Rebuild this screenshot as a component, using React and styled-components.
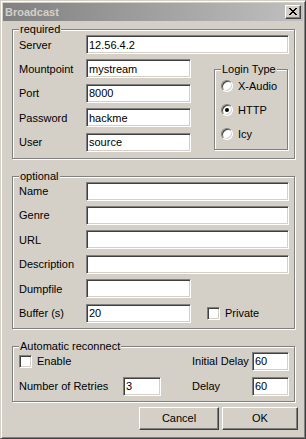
import React from "react";
import styled, { createGlobalStyle } from "styled-components";

const GlobalStyle = createGlobalStyle`
  html, body {
    margin: 0;
    padding: 0;
    background: #d4d0c8;
  }
  body {
    font-family: "Liberation Sans", Arial, sans-serif;
    font-size: 11px;
    color: #000;
  }
  * {
    box-sizing: border-box;
  }
`;

const Window = styled.div`
  width: 306px;
  height: 439px;
  background: #d4d0c8;
  border: 1px solid;
  border-color: #d4d0c8 #404040 #404040 #d4d0c8;
  box-shadow: inset 1px 1px 0 #fff, inset -1px -1px 0 #808080;
  padding: 2px;
  display: flex;
  flex-direction: column;
`;

const TitleBar = styled.div`
  height: 18px;
  display: flex;
  align-items: center;
  padding: 0 2px;
  background: linear-gradient(to right, #808080, #c0c0c0);
`;

const Title = styled.span`
  flex: 1;
  color: #d4d0c8;
  font-weight: bold;
  font-size: 11px;
`;

const CloseBtn = styled.div`
  width: 16px;
  height: 14px;
  background: #d4d0c8;
  border: 1px solid;
  border-color: #fff #404040 #404040 #fff;
  box-shadow: inset -1px -1px 0 #808080;
  display: flex;
  align-items: center;
  justify-content: center;
  padding-bottom: 1px;
`;

const Body = styled.div`
  display: flex;
  flex-direction: column;
  gap: 17px;
  padding: 8px 5px 0 9px;
`;

// etched group box, the caption sits over the top edge
const Group = styled.div`
  position: relative;
  width: 283px;
  border: 1px solid #808080;
  box-shadow: inset 1px 1px 0 #fff, 1px 1px 0 #fff;
  padding: 5px 5px ${(p) => p.$padBottom || 5}px 6px;
`;

const Legend = styled.span`
  position: absolute;
  top: -7px;
  left: 6px;
  line-height: 13px;
  padding: 0 1px;
  background: #d4d0c8;
  white-space: nowrap;
`;

const FormGrid = styled.div`
  display: grid;
  grid-template-columns: 67px 105px 1fr 75px;
  grid-auto-rows: 19px;
  row-gap: 5.4px;
  align-items: center;
`;

const Label = styled.span`
  grid-column: ${(p) => p.$col || "auto"};
  white-space: nowrap;
`;

const Field = styled.input`
  height: 19px;
  width: 100%;
  grid-column: ${(p) => p.$span || "auto"};
  border: 1px solid;
  border-color: #808080 #fff #fff #808080;
  box-shadow: inset 1px 1px 0 #404040, inset -1px -1px 0 #d4d0c8;
  background: #fff;
  padding: 0 2px;
  font: 11px "Liberation Sans", Arial, sans-serif;
  color: #000;
  outline: none;
`;

const LoginBox = styled.div`
  position: relative;
  grid-column: 4;
  grid-row: 2 / 6;
  align-self: start;
  justify-self: start;
  margin-top: 10px;
  width: 74px;
  height: 81px;
  border: 1px solid #808080;
  box-shadow: inset 1px 1px 0 #fff, 1px 1px 0 #fff;
  padding: 4px 0 0 6px;
`;

const OptionRow = styled.label`
  display: flex;
  align-items: center;
  gap: 5px;
  height: 24px;
  white-space: nowrap;
`;

const RadioDot = styled.span`
  width: 12px;
  height: 12px;
  border-radius: 50%;
  background: #fff;
  border: 1px solid;
  border-color: #808080 #fff #fff #808080;
  box-shadow: inset 1px 1px 0 #404040, inset -1px -1px 0 #d4d0c8;
  flex-shrink: 0;

  &::after {
    content: "";
    display: ${(p) => (p.$checked ? "block" : "none")};
    width: 4px;
    height: 4px;
    border-radius: 50%;
    background: #000;
    margin: 3px;
  }
`;

const CheckBox = styled.span`
  width: 13px;
  height: 13px;
  background: #fff;
  border: 1px solid;
  border-color: #808080 #fff #fff #808080;
  box-shadow: inset 1px 1px 0 #404040, inset -1px -1px 0 #d4d0c8;
  flex-shrink: 0;
`;

const CheckRow = styled.label`
  display: flex;
  align-items: center;
  gap: 5px;
  margin-left: ${(p) => p.$indent || 0}px;
  grid-column: ${(p) => p.$span || "auto"};
  white-space: nowrap;
`;

const ReconnectGrid = styled.div`
  display: grid;
  grid-template-columns: 104px 38px 1fr 60px 37px;
  grid-auto-rows: 19px;
  row-gap: 6px;
  align-items: center;
`;

const ButtonRow = styled.div`
  display: flex;
  justify-content: flex-end;
  gap: 3px;
  margin-top: -12px;
`;

const Button = styled.button`
  width: ${(p) => p.$w}px;
  height: 23px;
  background: #d4d0c8;
  border: 1px solid;
  border-color: #fff #404040 #404040 #fff;
  box-shadow: inset -1px -1px 0 #808080;
  font: 11px "Liberation Sans", Arial, sans-serif;
  color: #000;
  padding: 0;
`;

const CloseGlyph = () => (
  <svg width="8" height="7" viewBox="0 0 8 7" shapeRendering="crispEdges">
    <path
      fill="#000"
      d="M0 0h2v1H0zM6 0h2v1H6zM1 1h2v1H1zM5 1h2v1H5zM2 2h4v1H2zM3 3h2v1H3zM2 4h4v1H2zM1 5h2v1H1zM5 5h2v1H5zM0 6h2v1H0zM6 6h2v1H6z"
    />
  </svg>
);

const Radio = ({ label, checked }) => (
  <OptionRow>
    <RadioDot $checked={checked} />
    <span>{label}</span>
  </OptionRow>
);

export default function App() {
  return (
    <>
      <GlobalStyle />
      <Window>
        <TitleBar>
          <Title>Broadcast</Title>
          <CloseBtn>
            <CloseGlyph />
          </CloseBtn>
        </TitleBar>
        <Body>
          <Group $padBottom={6}>
            <Legend>required</Legend>
            <FormGrid>
              <Label>Server</Label>
              <Field $span="2 / 5" defaultValue="12.56.4.2" />
              <Label>Mountpoint</Label>
              <Field defaultValue="mystream" />
              <LoginBox>
                <Legend>Login Type</Legend>
                <Radio label="X-Audio" />
                <Radio label="HTTP" checked />
                <Radio label="Icy" />
              </LoginBox>
              <Label $col={1}>Port</Label>
              <Field defaultValue="8000" />
              <Label $col={1}>Password</Label>
              <Field defaultValue="hackme" />
              <Label $col={1}>User</Label>
              <Field defaultValue="source" />
            </FormGrid>
          </Group>

          <Group>
            <Legend>optional</Legend>
            <FormGrid>
              <Label>Name</Label>
              <Field $span="2 / 5" />
              <Label>Genre</Label>
              <Field $span="2 / 5" />
              <Label>URL</Label>
              <Field $span="2 / 5" />
              <Label>Description</Label>
              <Field $span="2 / 5" />
              <Label>Dumpfile</Label>
              <Field />
              <Label $col={1}>Buffer (s)</Label>
              <Field defaultValue="20" />
              <CheckRow $indent={16} $span="3 / 5">
                <CheckBox />
                <span>Private</span>
              </CheckRow>
            </FormGrid>
          </Group>

          <Group>
            <Legend>Automatic reconnect</Legend>
            <ReconnectGrid>
              <CheckRow $span="1 / 4">
                <CheckBox />
                <span>Enable</span>
              </CheckRow>
              <Label>Initial Delay</Label>
              <Field defaultValue="60" />
              <Label>Number of Retries</Label>
              <Field defaultValue="3" />
              <Label $col={4}>Delay</Label>
              <Field defaultValue="60" />
            </ReconnectGrid>
          </Group>

          <ButtonRow>
            <Button $w={80}>Cancel</Button>
            <Button $w={76}>OK</Button>
          </ButtonRow>
        </Body>
      </Window>
    </>
  );
}
